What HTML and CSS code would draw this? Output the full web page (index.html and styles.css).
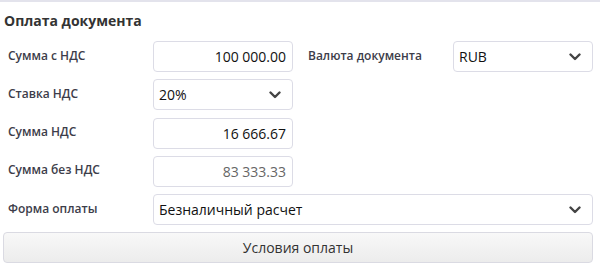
FILE: index.html
```html
<!DOCTYPE html>
<html lang="ru">
<head>
<meta charset="utf-8">
<link rel="stylesheet" href="styles.css">
</head>
<body>
<div class="panel">
  <h2 class="title">Оплата документа</h2>
  <div class="grid">
    <div class="label">Сумма с НДС</div>
    <div class="field num">100 000.00</div>
    <div class="label label-r">Валюта документа</div>
    <div class="field select"><span>RUB</span><svg class="chev" viewBox="0 0 12 8" width="12" height="8"><path d="M1.5 1.5 L6 6 L10.5 1.5" fill="none" stroke="#444" stroke-width="2.4" stroke-linecap="round" stroke-linejoin="round"/></svg></div>

    <div class="label">Ставка НДС</div>
    <div class="field select"><span>20%</span><svg class="chev" viewBox="0 0 12 8" width="12" height="8"><path d="M1.5 1.5 L6 6 L10.5 1.5" fill="none" stroke="#444" stroke-width="2.4" stroke-linecap="round" stroke-linejoin="round"/></svg></div>
    <div class="empty"></div>
    <div class="empty"></div>

    <div class="label">Сумма НДС</div>
    <div class="field num">16 666.67</div>
    <div class="empty"></div>
    <div class="empty"></div>

    <div class="label">Сумма без НДС</div>
    <div class="field num disabled">83 333.33</div>
    <div class="empty"></div>
    <div class="empty"></div>

    <div class="label">Форма оплаты</div>
    <div class="field select wide"><span>Безналичный расчет</span><svg class="chev" viewBox="0 0 12 8" width="12" height="8"><path d="M1.5 1.5 L6 6 L10.5 1.5" fill="none" stroke="#444" stroke-width="2.4" stroke-linecap="round" stroke-linejoin="round"/></svg></div>

    <div class="button">Условия оплаты</div>
  </div>
</div>
</body>
</html>
```
FILE: styles.css
```css
html, body {
  margin: 0;
  padding: 0;
  background: #fff;
}
body {
  font-family: "Open Sans", "Noto Sans", sans-serif;
  color: #222;
}
.panel {
  border-top: 2px solid #e3e3ec;
  width: 600px;
  height: 269px;
}
.title {
  margin: 0;
  padding: 9px 0 0 4px;
  font-size: 14px;
  font-weight: 700;
  color: #333;
  line-height: 19px;
  height: 28px;
}
.grid {
  display: grid;
  grid-template-columns: 150px 140px 160px 140px;
  grid-auto-rows: 31px;
  row-gap: 7.3px;
  margin-left: 3px;
  margin-top: 2px;
}
.label {
  display: flex;
  align-items: center;
  padding-left: 5px;
  padding-bottom: 3px;
  font-size: 12px;
  font-weight: 600;
  color: #3d3d4a;
}
.label-r {
  padding-left: 15px;
}
.field {
  box-sizing: border-box;
  border: 1px solid #dcdce6;
  border-radius: 4px;
  background: #fff;
  font-size: 14px;
  color: #111;
  display: flex;
  align-items: center;
}
.num {
  justify-content: flex-end;
  padding-right: 6px;
}
.disabled {
  color: #666;
}
.select {
  justify-content: space-between;
  padding-left: 5px;
  padding-right: 11px;
}
.chev {
  display: block;
  margin-top: 1px;
}
.wide {
  grid-column: 2 / 5;
}
.button {
  grid-column: 1 / 5;
  box-sizing: border-box;
  border: 1px solid #dadae2;
  border-radius: 4px;
  background: linear-gradient(#f8f8f8, #ececec);
  display: flex;
  align-items: center;
  justify-content: center;
  font-size: 14px;
  color: #333;
}
```
